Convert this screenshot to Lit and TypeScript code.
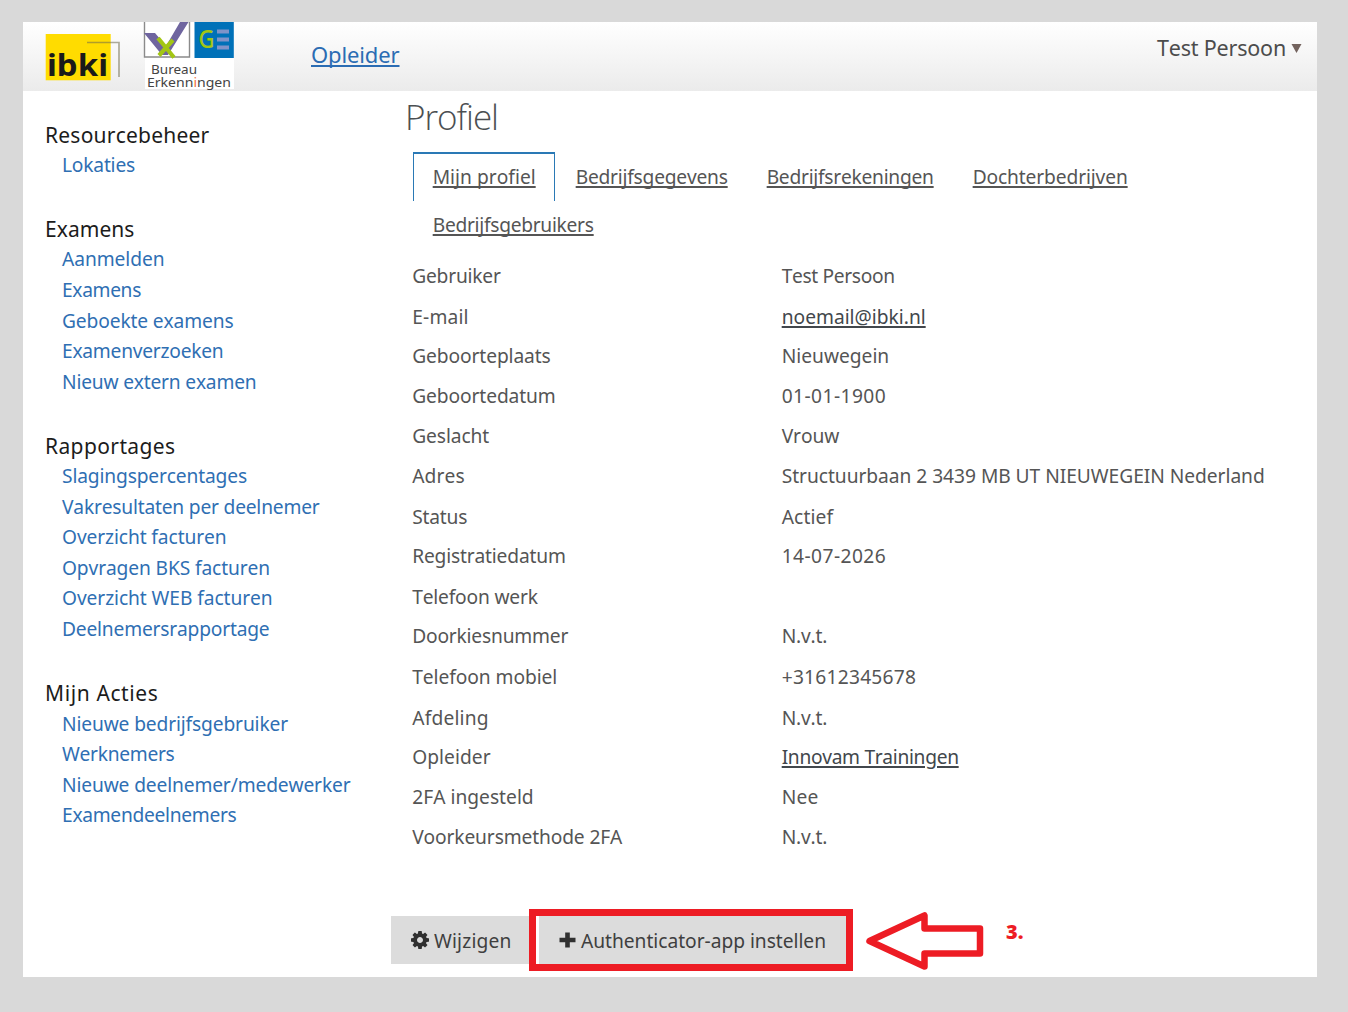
import { LitElement, html, css, svg } from "lit";
import { customElement, property } from "lit/decorators.js";

/** A single line of text whose tracking is adjusted to fill a given width. */
@customElement("fit-text")
class FitText extends LitElement {
  @property({ type: Number }) width = 0;
  @property() text = "";

  static styles = css`
    :host {
      display: inline-block;
      white-space: nowrap;
      text-decoration: inherit;
    }
    .run {
      display: inline-block;
      text-decoration: inherit;
      font-kerning: none;
      font-variant-ligatures: none;
    }
  `;

  render() {
    return html`<span class="run">${this.text}</span>`;
  }

  updated() {
    const run = this.renderRoot.querySelector(".run") as HTMLElement;
    run.style.letterSpacing = "0px";
    if (!this.width) return;
    const natural = run.getBoundingClientRect().width;
    const gap = (this.width - natural) / this.text.length;
    run.style.letterSpacing = `${gap.toFixed(3)}px`;
  }
}

type Item = [string, number];

const MENU: { title: Item; links: Item[] }[] = [
  { title: ["Resourcebeheer", 164.5], links: [["Lokaties", 73]] },
  {
    title: ["Examens", 89.5],
    links: [
      ["Aanmelden", 102.5],
      ["Examens", 79],
      ["Geboekte examens", 171.5],
      ["Examenverzoeken", 161.5],
      ["Nieuw extern examen", 194.5],
    ],
  },
  {
    title: ["Rapportages", 130.5],
    links: [
      ["Slagingspercentages", 185],
      ["Vakresultaten per deelnemer", 257.5],
      ["Overzicht facturen", 164.5],
      ["Opvragen BKS facturen", 208],
      ["Overzicht WEB facturen", 210.5],
      ["Deelnemersrapportage", 207.5],
    ],
  },
  {
    title: ["Mijn Acties", 113.5],
    links: [
      ["Nieuwe bedrijfsgebruiker", 226],
      ["Werknemers", 112.5],
      ["Nieuwe deelnemer/medewerker", 288.5],
      ["Examendeelnemers", 174.5],
    ],
  },
];

const TABS: Item[] = [
  ["Mijn profiel", 103],
  ["Bedrijfsgegevens", 152],
  ["Bedrijfsrekeningen", 167],
  ["Dochterbedrijven", 155],
  ["Bedrijfsgebruikers", 161],
];

const ROWS: { label: Item; value: Item; height: number; link?: boolean }[] = [
  { label: ["Gebruiker", 88.5], value: ["Test Persoon", 113], height: 41 },
  { label: ["E-mail", 56.5], value: ["noemail@ibki.nl", 144], height: 39, link: true },
  { label: ["Geboorteplaats", 138.5], value: ["Nieuwegein", 107.5], height: 40 },
  { label: ["Geboortedatum", 143.5], value: ["01-01-1900", 104.5], height: 40 },
  { label: ["Geslacht", 77], value: ["Vrouw", 57.5], height: 40 },
  { label: ["Adres", 52.5], value: ["Structuurbaan 2 3439 MB UT NIEUWEGEIN Nederland", 483], height: 41 },
  { label: ["Status", 55], value: ["Actief", 51.5], height: 39 },
  { label: ["Registratiedatum", 153.5], value: ["14-07-2026", 104.5], height: 41 },
  { label: ["Telefoon werk", 125.5], value: ["", 0], height: 39 },
  { label: ["Doorkiesnummer", 156], value: ["N.v.t.", 45.5], height: 41 },
  { label: ["Telefoon mobiel", 145], value: ["+31612345678", 134.5], height: 41 },
  { label: ["Afdeling", 76.5], value: ["N.v.t.", 45.5], height: 39 },
  { label: ["Opleider", 78.5], value: ["Innovam Trainingen", 177], height: 40, link: true },
  { label: ["2FA ingesteld", 121.5], value: ["Nee", 37], height: 40 },
  { label: ["Voorkeursmethode 2FA", 210], value: ["N.v.t.", 45.5], height: 40 },
];

const text = ([t, w]: Item) => html`<fit-text .text=${t} .width=${w}></fit-text>`;

const ibkiLogo = html`<svg class="ibki" viewBox="0 0 78 50" width="78" height="50">
  <rect x="0.7" y="2" width="65" height="46.3" fill="#ffdc00" />
  <path d="M42 10.5H74V45" fill="none" stroke="#6e6a4c" stroke-opacity="0.55" stroke-width="1.7" />
  <text x="2" y="43.5" class="ibki-word" textLength="61" lengthAdjust="spacingAndGlyphs">ibki</text>
</svg>`;

const bureauLogo = html`<svg class="bureau" viewBox="0 0 92 69" width="92" height="69">
  <rect x="2" y="0" width="89" height="67" fill="#fff" />
  <path d="M1.5 0V35H46.5V0" fill="none" stroke="#8b8b8b" stroke-width="1.4" />
  <path d="M1 11H12L23 24L37 0H45.5L25 33H19Z" fill="#6f659f" />
  <path d="M15 16L31 35.5M30 18L16 33.500" fill="none" stroke="#a3c614" stroke-width="4.2" />
  <rect x="51.5" y="0" width="39.3" height="36" fill="#0071b8" />
  <text x="55.5" y="26" class="g-mark" textLength="16" lengthAdjust="spacingAndGlyphs">G</text>
  <path d="M74 9.5H86M74 17.5H86M74 25.5H86" stroke="#7f93c8" stroke-width="4" />
  <text x="8" y="51.5" class="bureau-word" textLength="46" lengthAdjust="spacingAndGlyphs">Bureau</text>
  <text x="4" y="64.5" class="bureau-word" textLength="84" lengthAdjust="spacingAndGlyphs">Erkenn<tspan fill="#f0703c">i</tspan>ngen</text>
</svg>`;

const gear = svg`<path fill="currentColor" d="M1024 896q0-106-75-181t-181-75-181 75-75 181 75 181 181 75 181-75 75-181zm512-109v222q0 12-8 23t-20 13l-185 28q-19 54-39 91 35 50 107 138 10 12 10 25t-9 23q-27 37-99 108t-94 71q-12 0-26-9l-138-108q-44 23-91 38-16 136-29 186-7 28-36 28h-222q-14 0-24.500-8.500t-11.500-21.500l-28-184q-49-16-90-37l-141 107q-10 9-25 9-14 0-25-11-126-114-165-168-7-10-7-23 0-12 8-23 15-21 51-66.500t54-70.500q-27-50-41-99l-183-27q-13-2-21-12.500t-8-23.500v-222q0-12 8-23t19-13l186-28q14-46 39-92-40-57-107-138-10-12-10-24 0-10 9-23 26-36 98.500-107.500t94.500-71.500q13 0 26 10l138 107q44-23 91-38 16-136 29-186 7-28 36-28h222q14 0 24.500 8.500t11.500 21.500l28 184q49 16 90 37l142-107q9-9 24-9 13 0 25 10 129 119 165 170 7 8 7 22 0 12-8 23-15 21-51 66.500t-54 70.500q26 50 41 98l183 28q13 2 21 12.500t8 23.500z" />`;

@customElement("app-root")
class AppRoot extends LitElement {
  static styles = css`
    :host {
      display: block;
      box-sizing: border-box;
      width: 1348px;
      height: 1012px;
      padding: 22px 31px 35px 23px;
      background: #d9d9d9;
      overflow: hidden;
      font-family: "Noto Sans", "Open Sans", sans-serif;
      font-size: 19.2px;
      color: #555;
    }
    * {
      box-sizing: border-box;
    }
    .page {
      display: flex;
      flex-direction: column;
      width: 1294px;
      height: 955px;
      background: #fff;
    }
    .header {
      display: flex;
      height: 69px;
      flex: none;
      padding-left: 22px;
      background: linear-gradient(#ffffff, #ebebeb);
    }
    .ibki {
      margin-top: 10px;
      overflow: visible;
    }
    .bureau {
      margin-left: 20px;
    }
    .ibki-word {
      font: 700 30px "Noto Sans", sans-serif;
      fill: #1a1a1a;
    }
    .g-mark {
      font: 500 25px "Noto Sans", sans-serif;
      fill: #a3c614;
    }
    .bureau-word {
      font: 12.5px "Noto Sans", sans-serif;
      fill: #444;
    }
    .role {
      margin: 17px 0 0 76px;
      font-size: 22px;
      line-height: 30px;
      color: #2b6cb3;
      text-decoration: underline 1.5px;
      text-decoration-skip-ink: none;
      text-underline-offset: 2px;
    }
    .user {
      display: flex;
      align-items: center;
      height: 30px;
      margin: 10px 15px 0 auto;
      gap: 5px;
      font-size: 21.5px;
      color: #4c4c4c;
    }
    .caret {
      margin-top: 2px;
    }
    .body {
      display: flex;
      flex: 1;
      min-height: 0;
    }
    .menu {
      width: 368px;
      flex: none;
      padding: 28.5px 0 0 22px;
    }
    .group {
      margin-bottom: 33.8px;
    }
    .title {
      height: 30.3px;
      line-height: 30px;
      font-size: 21px;
      color: #1c1c1c;
    }
    .entry {
      height: 30.55px;
      line-height: 30px;
      padding-left: 17px;
      color: #2f6fb3;
    }
    .main {
      flex: 1;
      display: flex;
      flex-direction: column;
    }
    .heading {
      height: 61px;
      padding: 1px 0 0 14px;
      font: 300 35px/50px "Open Sans", "Noto Sans", sans-serif;
      color: #4b4f52;
    }
    .tabs {
      display: flex;
      flex-wrap: wrap;
      width: 780px;
      padding-left: 21.5px;
    }
    .tab {
      height: 48px;
      padding: 8px 17.8px 0 19.2px;
      line-height: 30px;
      border: solid transparent;
      border-width: 2px 1px 0 1px;
      text-decoration: underline 1.5px;
      text-decoration-skip-ink: none;
      text-underline-offset: 2px;
    }
    .tab.on {
      height: 49px;
      margin-bottom: -1px;
      padding-right: 18.8px;
      border-color: #2a79b5;
    }
    .rows {
      margin-top: 8px;
      padding-left: 21.2px;
    }
    .row {
      display: flex;
      line-height: 40px;
    }
    .label {
      width: 369.5px;
    }
    .linked {
      color: #42474c;
      text-decoration: underline 1.5px;
      text-underline-offset: 2px;
    }
    .actions {
      position: relative;
      display: flex;
      margin-top: 59px;
      gap: 5px;
      color: #3f3f3f;
    }
    .button {
      display: flex;
      align-items: center;
      height: 48px;
      background: #dcdcdc;
    }
    .icon {
      color: #303030;
    }
    .edit {
      width: 143px;
      padding-left: 20px;
      gap: 5px;
    }
    .auth {
      width: 310px;
      padding-left: 20px;
      gap: 5px;
    }
    .marks {
      position: absolute;
      left: 137px;
      top: -9px;
    }
    .step {
      font: 900 20px "Noto Sans", sans-serif;
      fill: #ed1c24;
    }
  `;

  render() {
    return html`<div class="page">
      <div class="header">
        ${ibkiLogo}${bureauLogo}
        <div class="role">${text(["Opleider", 88.5])}</div>
        <div class="user">
          ${text(["Test Persoon", 129])}
          <svg class="caret" width="11" height="11" viewBox="0 0 11 11"><path d="M0.5 1H10.5L5.5 10Z" fill="#73635e" /></svg>
        </div>
      </div>
      <div class="body">
        <nav class="menu">
          ${MENU.map(
            (g) => html`<div class="group">
              <div class="title">${text(g.title)}</div>
              ${g.links.map((l) => html`<div class="entry">${text(l)}</div>`)}
            </div>`,
          )}
        </nav>
        <main class="main">
          <div class="heading">${text(["Profiel", 93])}</div>
          <div class="tabs">
            ${TABS.map((t, i) => html`<div class="tab ${i === 0 ? "on" : ""}">${text(t)}</div>`)}
          </div>
          <div class="rows">
            ${ROWS.map(
              (r) => html`<div class="row" style="height:${r.height}px">
                <div class="label">${text(r.label)}</div>
                <div class=${r.link ? "linked" : "value"}>${text(r.value)}</div>
              </div>`,
            )}
          </div>
          <div class="actions">
            <div class="button edit">
              <svg class="icon" width="18" height="18" viewBox="0 128 1536 1536">${gear}</svg>
              ${text(["Wijzigen", 77.5])}
            </div>
            <div class="button auth">
              <svg class="icon" width="17" height="17" viewBox="0 0 17 17">
                <path d="M8.5 0.5V15.5M0.5 8H16.5" stroke="currentColor" stroke-width="4.6" />
              </svg>
              ${text(["Authenticator-app instellen", 245])}
            </div>
            <svg class="marks" width="510" height="66" viewBox="528 907 510 66">
              <rect x="532.5" y="912.5" width="317" height="55" fill="none" stroke="#ed1c24" stroke-width="7" />
              <path
                d="M869.5 941L924.5 915.5V928.5H980V953.5H924.5V966.5Z"
                fill="none" stroke="#ed1c24" stroke-width="6.5" stroke-linejoin="round"
              />
              <text class="step" x="1006" y="939">3.</text>
            </svg>
          </div>
        </main>
      </div>
    </div>`;
  }
}
